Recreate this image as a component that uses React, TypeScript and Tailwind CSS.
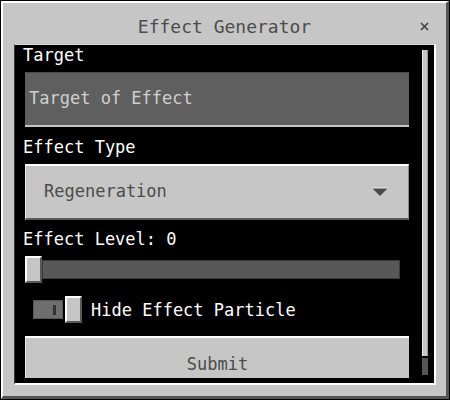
import { useState } from 'react';

// Minecraft-style form window: "Effect Generator"
const font = 'font-["DejaVu_Sans_Mono","Liberation_Mono",monospace]';

function CloseIcon() {
    return (
        <svg width="9" height="9" viewBox="0 0 9 9" className="block">
            <path d="M1 1 L8 8 M8 1 L1 8" stroke="#3f3f3f" strokeWidth="1.6" fill="none" />
        </svg>
    );
}

function ArrowDown() {
    return (
        <svg width="18" height="12" viewBox="0 0 18 12" className="block">
            <path d="M1 2 H17 L9 10 Z" fill="#4a4a4a" />
            <path d="M1 2 H17" stroke="#eeeeee" strokeWidth="1" />
        </svg>
    );
}

export default function App() {
    const [level] = useState(0);
    const [hideParticle, setHideParticle] = useState(false);

    return (
        <div className={`w-[450px] h-[400px] bg-black p-px ${font}`}>
            <div className="h-full flex flex-col bg-[#c6c6c6] border-t-2 border-l-2 border-white border-r-[3px] border-b-[3px] border-r-[#555555] border-b-[#555555]">

                {/* Title bar */}
                <div className="h-[41px] shrink-0 grid grid-cols-[1fr_auto_1fr] items-center pt-[7px]">
                    <span />
                    <span className="text-[18px] leading-[20px] text-[#4c4c4c]">Effect Generator</span>
                    <span className="justify-self-end mr-[17px] -mt-[2px]">
                        <CloseIcon />
                    </span>
                </div>

                {/* Scroll panel */}
                <div className="flex-1 ml-[11px] mr-[10px] mb-[11px] bg-black border-t border-t-[#d8d8d8] border-l border-l-[#3a3a3a] border-r-2 border-b-2 border-r-white border-b-white flex overflow-hidden">
                    <div className="flex-1 pl-[8px] pt-px text-[17px] text-white">
                        <div className="h-[26px] leading-[18px]">Target</div>
                        <div className="ml-[2px] w-[384px] h-[55px] bg-[#5f5f5f] border-t border-t-[#4e4e4e] border-b-2 border-b-[#c6c6c6] flex items-center pl-[4px] text-[#cfcfcf]">
                            Target of Effect
                        </div>

                        <div className="h-[37px] pt-[11px] leading-[18px]">Effect Type</div>
                        <div className="ml-[2px] w-[384px] h-[56px] bg-[#c6c6c6] border-t-2 border-t-white border-l border-l-[#e6e6e6] border-b-2 border-b-[#5a5a5a] border-r border-r-[#8a8a8a] flex items-center justify-between pl-[18px] pr-[19px] text-[#4c4c4c]">
                            <span>Regeneration</span>
                            <ArrowDown />
                        </div>

                        <div className="h-[36px] pt-[10px] leading-[18px]">Effect Level: {level}</div>
                        <div className="ml-[2px] h-[27px] flex items-center">
                            <div className="w-[17px] h-[27px] bg-[#c6c6c6] border-t-2 border-l-2 border-white border-b-2 border-r-2 border-b-[#585858] border-r-[#585858]" />
                            <div className="w-[358px] h-[19px] bg-[#585858] border border-[#3a3a3a]" />
                        </div>

                        <div className="mt-[13px] ml-[10px] h-[27px] flex items-center">
                            <button
                                onClick={() => setHideParticle(v => !v)}
                                className="flex items-center gap-[2px]"
                            >
                                <span className="w-[30px] h-[19px] bg-[#6e6e6e] border border-[#555555] flex items-center justify-end pr-[6px]">
                                    <span className="w-[3px] h-[10px] bg-[#333333]" />
                                </span>
                                <span className="w-[17px] h-[27px] bg-[#c6c6c6] border-t-2 border-l-2 border-white border-b-2 border-r-2 border-b-[#585858] border-r-[#585858]" />
                            </button>
                            <span className="ml-[9px] leading-[18px]">Hide Effect Particle</span>
                        </div>

                        <button className="mt-[13px] ml-[2px] w-[384px] h-[42px] bg-[#c6c6c6] border-t-2 border-t-white border-l border-l-[#e6e6e6] flex items-center justify-center pt-[12px] text-[#4c4c4c] leading-[18px]">
                            Submit
                        </button>
                    </div>

                    {/* Scrollbar */}
                    <div className="w-[6px] mr-[6px] mt-[5px] mb-[8px] flex flex-col">
                        <div className="h-[306px] bg-[#c6c6c6] border-l border-l-[#e8e8e8] border-r border-r-[#9a9a9a]" />
                        <div className="h-[2px] bg-black" />
                        <div className="flex-1 bg-[#555555]" />
                    </div>
                </div>
            </div>
        </div>
    );
}
